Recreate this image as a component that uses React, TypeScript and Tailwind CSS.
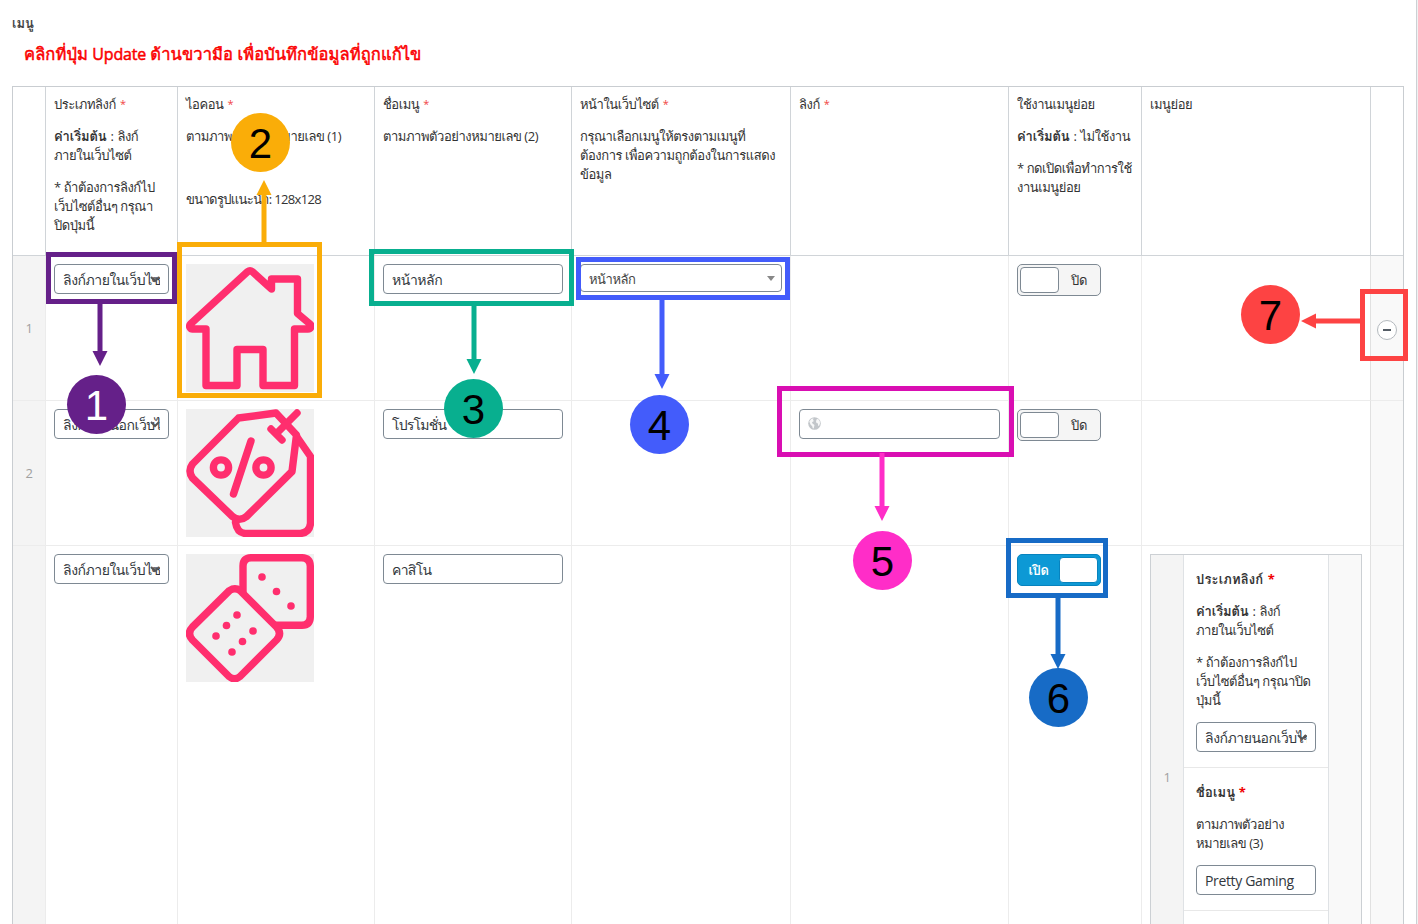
import type { ReactNode } from "react";

const PINK = "#ff2e6e";

function Req() {
  return <span className="ml-px inline-block align-[1px] text-[11px] leading-none text-[#f14444]">*</span>;
}

function P({ children }: { children?: ReactNode }) {
  return <p className="mb-[13px] min-h-[19px] whitespace-nowrap">{children}</p>;
}

function Default({ children }: { children: ReactNode }) {
  return (
    <span className="[word-spacing:1px]">
      <b className="tracking-[-0.1px]">ค่าเริ่มต้น</b> : {children}
    </span>
  );
}

function Head({ children }: { children?: ReactNode }) {
  return <div className="border-b border-l border-[#d0d4d8] px-2 pt-2">{children}</div>;
}

function Cell({ children }: { children?: ReactNode }) {
  return <div className="border-b border-l border-[#ececec] p-2">{children}</div>;
}

function Handle({ children }: { children?: ReactNode }) {
  return (
    <div className="flex items-center justify-center border-b border-[#ececec] bg-[#f4f4f4] text-[#a0a0a0]">
      {children}
    </div>
  );
}

function Box({ children }: { children?: ReactNode }) {
  return (
    <div className="flex h-[30px] items-center whitespace-nowrap rounded-[4px] border border-[#7e8993] bg-white px-2 text-[14px] text-[#32373c]">
      {children}
    </div>
  );
}

function Select({ children }: { children: ReactNode }) {
  return (
    <div className="relative flex h-[30px] items-center rounded-[4px] border border-[#7e8993] bg-white px-2 text-[14px] text-[#32373c]">
      <span className="w-full overflow-hidden whitespace-nowrap pt-px leading-[28px]">{children}</span>
      <svg className="absolute right-[7px] top-[8px] size-3" viewBox="0 0 12 12" fill="none" stroke="#555" strokeWidth="2">
        <path d="M2 4l4 4 4-4" />
      </svg>
    </div>
  );
}

function SwitchOff() {
  return (
    <div className="flex h-8 w-[84px] items-center rounded-[5px] border border-[#7e8993] bg-[#f5f5f5] pl-[2px]">
      <span className="h-[26px] w-[39px] rounded-[4px] border border-[#7e8993] bg-white" />
      <span className="w-10 text-center">ปิด</span>
    </div>
  );
}

function SwitchOn() {
  return (
    <div className="flex h-8 w-[84px] items-center rounded-[5px] border border-[#0783be] bg-[#0d99d5] pr-[2px]">
      <span className="w-[41px] text-center font-semibold text-white">เปิด</span>
      <span className="h-[26px] w-[39px] rounded-[4px] border border-[#0783be] bg-white" />
    </div>
  );
}

function HomeIcon() {
  return (
    <svg className="size-32 bg-[#f0f0f0]" viewBox="0 0 128 128" fill="none" stroke={PINK} strokeWidth="7.4" strokeLinejoin="round" strokeLinecap="round">
      <path d="M61.500 7.800L4.500 60c-2 2.500 0 5 2 5h13.500v56.500h31v-36h26v36h31.500v-56.500h13.500c3 0 4-3 2-5l-12.500-10.500V15H85.500v10L66.500 7.800q-2.500-1.800-5 0z" />
    </svg>
  );
}

function TagIcon() {
  return (
    <svg className="size-32 bg-[#f0f0f0]" viewBox="0 0 128 128" fill="none" stroke={PINK} strokeWidth="7.400" strokeLinejoin="round" strokeLinecap="round">
      <path d="M90 4L52.500 9 6.500 55q-5 7 0 14l40 38.500q7 5.500 14 0l45.500-45 4.500-36.500z" />
      <path d="M111 28l13.500 19.500v67q-1 9-10 10H59q-8-1-9.500-11M85 20l11 11M111 4L91 24" />
      <path d="M65 32L47.500 85" />
      <circle cx="35" cy="58.500" r="7.600" />
      <circle cx="77.500" cy="58.500" r="7.600" />
    </svg>
  );
}

function DiceIcon() {
  const dots = [
    [76, 23], [90.500, 37.500], [105, 52], [51, 61], [40.500, 71.500], [30, 82],
    [67, 77], [56.500, 87.500], [46, 98],
  ];
  return (
    <svg className="size-32 bg-[#f0f0f0]" viewBox="0 0 128 128" fill="none" stroke={PINK} strokeWidth="7.400" strokeLinejoin="round" strokeLinecap="round">
      <path d="M57 38V12q0-8 8-8.300h51q8 .3 8.300 8.300v51q-.3 8-8.300 8.300H90" />
      <path d="M43.500 36.500L6.500 73q-6 6.500 0 13l36.500 36.500q5.500 4.500 11 0l36.500-36.500q6-6.500 0-13L54 36.500q-5-3.500-10.500 0z" />
      {dots.map(([x, y]) => (
        <circle key={`${x}-${y}`} cx={x} cy={y} r="3.800" fill={PINK} stroke="none" />
      ))}
    </svg>
  );
}

function GlobeIcon() {
  return (
    <svg className="mb-[2px] size-[13px]" viewBox="0 0 13 13">
      <circle cx="6.500" cy="6.500" r="6.300" fill="#c2c6ca" />
      <path d="M1.300 4.500L3.200 2l2.300-.8L5 3l1 1-2 1.200.5 1.300L6.500 8l-.8 3.500-1-.3-.5-2L2.500 7.500zM8.500 2.500l1.500-.8 1.800 2.500.2 2.300L11 9l-1-.5V6.500L8.500 6 8 4.500z" fill="#fff" fillOpacity="0.850" />
    </svg>
  );
}

function Table() {
  return (
    <div className="ml-3 grid h-[839px] w-[1392px] grid-cols-[32px_132px_197px_197px_219px_218px_133px_229px_33px] grid-rows-[169px_145px_145px_1fr] border-x border-t border-[#c9cdd1] bg-white">
      <div className="border-b border-[#d0d4d8]" />
      <Head>
        <P>ประเภทลิงก์ <Req /></P>
        <P><Default>ลิงก์</Default><br />ภายในเว็บไซต์</P>
        <P>* ถ้าต้องการลิงก์ไป<br />เว็บไซต์อื่นๆ กรุณา<br />ปิดปุ่มนี้</P>
      </Head>
      <Head>
        <P>ไอคอน <Req /></P>
        <P>ตามภาพตัวอย่างหมายเลข (1)</P>
        <P />
        <div className="-mt-px tracking-[-0.65px]"><P>ขนาดรูปแนะนำ: 128x128</P></div>
      </Head>
      <Head>
        <P>ชื่อเมนู <Req /></P>
        <P>ตามภาพตัวอย่างหมายเลข (2)</P>
      </Head>
      <Head>
        <P>หน้าในเว็บไซต์ <Req /></P>
        <P>กรุณาเลือกเมนูให้ตรงตามเมนูที่<br />ต้องการ เพื่อความถูกต้องในการแสดง<br />ข้อมูล</P>
      </Head>
      <Head><P>ลิงก์ <Req /></P></Head>
      <Head>
        <P>ใช้งานเมนูย่อย</P>
        <P><Default>ไม่ใช้งาน</Default></P>
        <P>* กดเปิดเพื่อทำการใช้<br />งานเมนูย่อย</P>
      </Head>
      <Head><P>เมนูย่อย</P></Head>
      <Head />

      <Handle>1</Handle>
      <Cell><Select>ลิงก์ภายในเว็บไซต์</Select></Cell>
      <Cell><HomeIcon /></Cell>
      <Cell><Box>หน้าหลัก</Box></Cell>
      <Cell>
        <div className="flex h-7 items-center justify-between rounded-[4px] border border-[#7e8993] pl-2 pr-[6px] text-[#444]">
          <span className="pt-[2px]">หน้าหลัก</span>
          <svg className="h-[5px] w-2" viewBox="0 0 8 5"><path d="M0 0h8L4 5z" fill="#888" /></svg>
        </div>
      </Cell>
      <Cell />
      <Cell><SwitchOff /></Cell>
      <Cell />
      <div className="flex items-center justify-center border-b border-l border-[#e1e1e1] border-b-[#ececec] bg-[#f9f9f9] pt-[3px]">
        <span className="flex size-5 items-center justify-center rounded-full border border-[#b4b9be] bg-white">
          <span className="h-[2px] w-2 bg-[#555d66]" />
        </span>
      </div>

      <Handle>2</Handle>
      <Cell><Select>ลิงก์ภายนอกเว็บไซต์</Select></Cell>
      <Cell><TagIcon /></Cell>
      <Cell><Box><span className="tracking-[-0.8px]">โปรโมชั่น</span></Box></Cell>
      <Cell />
      <Cell><Box><GlobeIcon /></Box></Cell>
      <Cell><SwitchOff /></Cell>
      <Cell />
      <div className="border-b border-l border-[#e1e1e1] border-b-[#ececec] bg-[#f9f9f9]" />

      <Handle />
      <Cell><Select>ลิงก์ภายในเว็บไซต์</Select></Cell>
      <Cell><DiceIcon /></Cell>
      <Cell><Box><span className="tracking-[-0.7px]">คาสิโน</span></Box></Cell>
      <Cell />
      <Cell />
      <Cell><SwitchOn /></Cell>
      <div className="border-l border-[#ececec] pl-2 pt-2"><SubTable /></div>
      <div className="border-l border-[#e1e1e1] bg-[#f9f9f9]" />
    </div>
  );
}

function SubTable() {
  return (
    <div className="grid h-[371px] w-[212px] grid-cols-[32px_146px_32px] border-x border-t border-[#ccd0d4]">
      <div className="bg-[#f4f4f4] pt-[213px] text-center text-[#a0a0a0]">1</div>
      <div className="border-x border-[#dfe2e5]">
        <div className="h-[213px] border-b border-[#e8e8e8] px-3 pt-[15px]">
          <P><b className="tracking-[0.15px]">ประเภทลิงก์ <span className="ml-px text-[#f00000]">*</span></b></P>
          <P><Default>ลิงก์</Default><br />ภายในเว็บไซต์</P>
          <P>* ถ้าต้องการลิงก์ไป<br />เว็บไซต์อื่นๆ กรุณาปิด<br />ปุ่มนี้</P>
          <div className="-mt-px"><Select>ลิงก์ภายนอกเว็บไซต์</Select></div>
        </div>
        <div className="h-[143px] border-b border-[#e8e8e8] px-3 pt-[15px]">
          <P><b className="tracking-[0.15px]">ชื่อเมนู <span className="text-[#f00000]">*</span></b></P>
          <P>ตามภาพตัวอย่าง<br />หมายเลข (3)</P>
          <div className="-mt-px"><Box><span className="pt-px tracking-[-0.35px]">Pretty Gaming</span></Box></div>
        </div>
      </div>
      <div className="bg-[#f9f9f9]" />
    </div>
  );
}

function Callouts() {
  return (
    <div className="pointer-events-none absolute inset-0 font-['Liberation_Sans',sans-serif] text-[42px] leading-none tracking-normal text-black">
      <div className="absolute left-[46px] top-[252px] h-[52px] w-[131px] border-[5px] border-[#652089]" />
      <div className="absolute left-[177px] top-[242px] h-[156px] w-[145px] border-[5px] border-[#faad08]" />
      <div className="absolute left-[369px] top-[249px] h-[57px] w-[205px] border-[5px] border-[#08af8f]" />
      <div className="absolute left-[576px] top-[257px] h-[43px] w-[214px] border-[5px] border-[#435cfb]" />
      <div className="absolute left-[777px] top-[386px] h-[71px] w-[237px] border-[5px] border-[#d90eb2]" />
      <div className="absolute left-[1006px] top-[538px] h-[60px] w-[102px] border-[5px] border-[#176bc6]" />
      <div className="absolute left-[1360px] top-[289px] h-[72px] w-[48px] border-[5px] border-[#fd4343]" />
      <svg className="absolute inset-0" width="1418" height="924" viewBox="0 0 1418 924">
        <path fill="#652089" d="M97.500 303h5v48h5L100 366l-7.500-15h5z" />
        <path fill="#faad08" d="M261.500 243v-48h-5L264 180l7.500 15h-5v48z" />
        <path fill="#08af8f" d="M471.500 305h5v54h5L474 374l-7.500-15h5z" />
        <path fill="#435cfb" d="M659.500 299h5v75h5L662 389l-7.500-15h5z" />
        <path fill="#ff2dc8" d="M879.500 453h5v53h5L882 521l-7.500-15h5z" />
        <path fill="#176bc6" d="M1055.500 597h5v57h5l-7.500 15-7.500-15h5z" />
        <path fill="#fd4343" d="M1361 318.500h-45v-5L1301 321l15 7.500v-5h45z" />
      </svg>
      <Dot className="left-[67px] top-[375px] bg-[#652089] text-white">1</Dot>
      <Dot className="left-[231px] top-[113px] bg-[#faad08]">2</Dot>
      <Dot className="left-[444px] top-[379px] bg-[#08af8f]">3</Dot>
      <Dot className="left-[630px] top-[395px] bg-[#435cfb]">4</Dot>
      <Dot className="left-[853px] top-[531px] bg-[#ff2dc8]">5</Dot>
      <Dot className="left-[1029px] top-[668px] bg-[#176bc6]">6</Dot>
      <Dot className="left-[1241px] top-[285px] bg-[#fd4343]">7</Dot>
    </div>
  );
}

function Dot({ className, children }: { className: string; children: ReactNode }) {
  return (
    <div className={`absolute flex size-[59px] items-center justify-center rounded-full pt-[2px] ${className}`}>{children}</div>
  );
}

export default function App() {
  return (
    <div className="relative h-[924px] w-[1418px] overflow-hidden bg-[#f1f1f1] font-['Open_Sans','Loma',sans-serif] text-[13px] leading-[19px] tracking-[-0.45px] text-[#333]">
      <div className="h-full w-[1417px] border-r border-[#ccd0d4] bg-white">
        <div className="h-[86px] pt-[14px]">
          <p className="pl-3 font-bold tracking-normal text-[#444]">เมนู</p>
          <p className="pl-6 pt-[11px] text-[16.5px] font-normal leading-[20px] tracking-[0.1px] text-[#fb0000] [-webkit-text-stroke:0.5px_#fb0000]">
            คลิกที่ปุ่ม <span className="text-[16px] tracking-[-0.2px]">Update</span> ด้านขวามือ เพื่อบันทึกข้อมูลที่ถูกแก้ไข
          </p>
        </div>
        <Table />
      </div>
      <Callouts />
    </div>
  );
}
